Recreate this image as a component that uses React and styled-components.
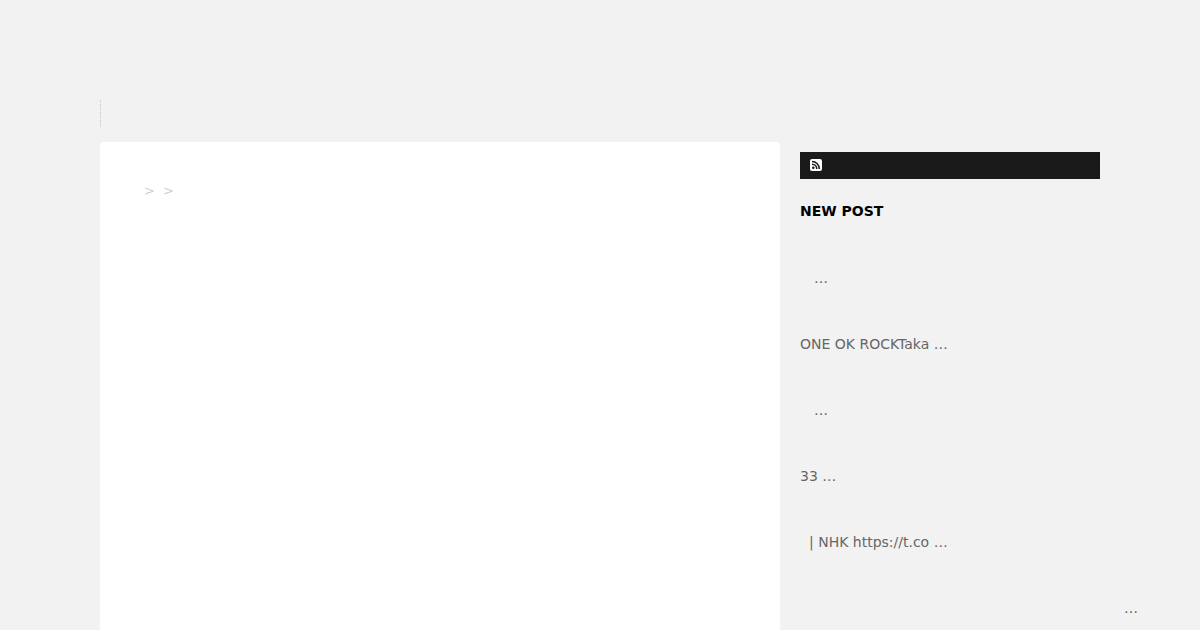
import React from "react";
import styled, { createGlobalStyle } from "styled-components";

const GlobalStyle = createGlobalStyle`
*{
  margin: 0;
  padding: 0;
  box-sizing: border-box;
}
html, body{
  height: 630px;
  overflow: hidden;
}
body{
  background-color: #f2f2f2;
  font-family: "DejaVu Sans", sans-serif;
}
`;

const Wrapper = styled.div`
  width: 1000px;
  height: 630px;
  margin: 0 auto;
  padding-top: 100px;
`;

const Header = styled.header`
  height: 42px;
`;

const HeaderMark = styled.div`
  width: 1px;
  height: 27px;
  border-left: 1px dotted #c8c8c8;
`;

const Columns = styled.div`
  display: flex;
  align-items: flex-start;
  gap: 20px;
`;

const Main = styled.main`
  width: 680px;
  height: 488px;
  padding: 40px 44px;
  background-color: #fff;
  border-radius: 4px 4px 0 0;
`;

const Crumbs = styled.div`
  display: flex;
  gap: 8px;
  font-size: 13px;
  line-height: 18px;
  color: #cfcfcf;
`;

const Side = styled.aside`
  width: 300px;
  padding-top: 10px;
`;

const FeedBar = styled.div`
  display: flex;
  align-items: flex-start;
  height: 27px;
  padding: 7px 0 0 10px;
  background-color: #1a1a1a;
`;

const SideTitle = styled.h2`
  margin-top: 23px;
  font-size: 14px;
  line-height: 18px;
  font-weight: 700;
  color: #000;
`;

const PostList = styled.ul`
  margin-top: 24px;
  list-style: none;
`;

const Post = styled.li`
  height: 66px;
  padding-top: 25px;
  padding-left: ${(p) => p.$indent || 0}px;
  font-size: 14px;
  line-height: 18px;
  color: #666;
`;

const More = styled.div`
  margin-top: 25px;
  padding-left: 324px;
  font-size: 14px;
  line-height: 18px;
  color: #666;
`;

const posts = [
  { text: "…", indent: 14 },
  { text: "ONE OK ROCKTaka …" },
  { text: "…", indent: 14 },
  { text: "33 …" },
  { text: "| NHK https://t.co …", indent: 9 },
];

function FeedIcon() {
  return (
    <svg width="12" height="12" viewBox="0 0 12 12" style={{ display: "block" }}>
      <rect width="12" height="12" rx="2" fill="#fff" />
      <circle cx="3.3" cy="8.7" r="1.3" fill="#1a1a1a" />
      <path
        d="M2 5.2a4.8 4.8 0 0 1 4.8 4.8M2 2.6A7.4 7.4 0 0 1 9.4 10"
        fill="none"
        stroke="#1a1a1a"
        strokeWidth="1.5"
      />
    </svg>
  );
}

export default function App() {
  return (
    <Wrapper>
      <GlobalStyle />
      <Header>
        <HeaderMark />
      </Header>
      <Columns>
        <Main>
          <Crumbs>
            <span>&gt;</span>
            <span>&gt;</span>
          </Crumbs>
        </Main>
        <Side>
          <FeedBar>
            <FeedIcon />
          </FeedBar>
          <SideTitle>NEW POST</SideTitle>
          <PostList>
            {posts.map((post, i) => (
              <Post key={i} $indent={post.indent}>
                {post.text}
              </Post>
            ))}
          </PostList>
          <More>…</More>
        </Side>
      </Columns>
    </Wrapper>
  );
}
